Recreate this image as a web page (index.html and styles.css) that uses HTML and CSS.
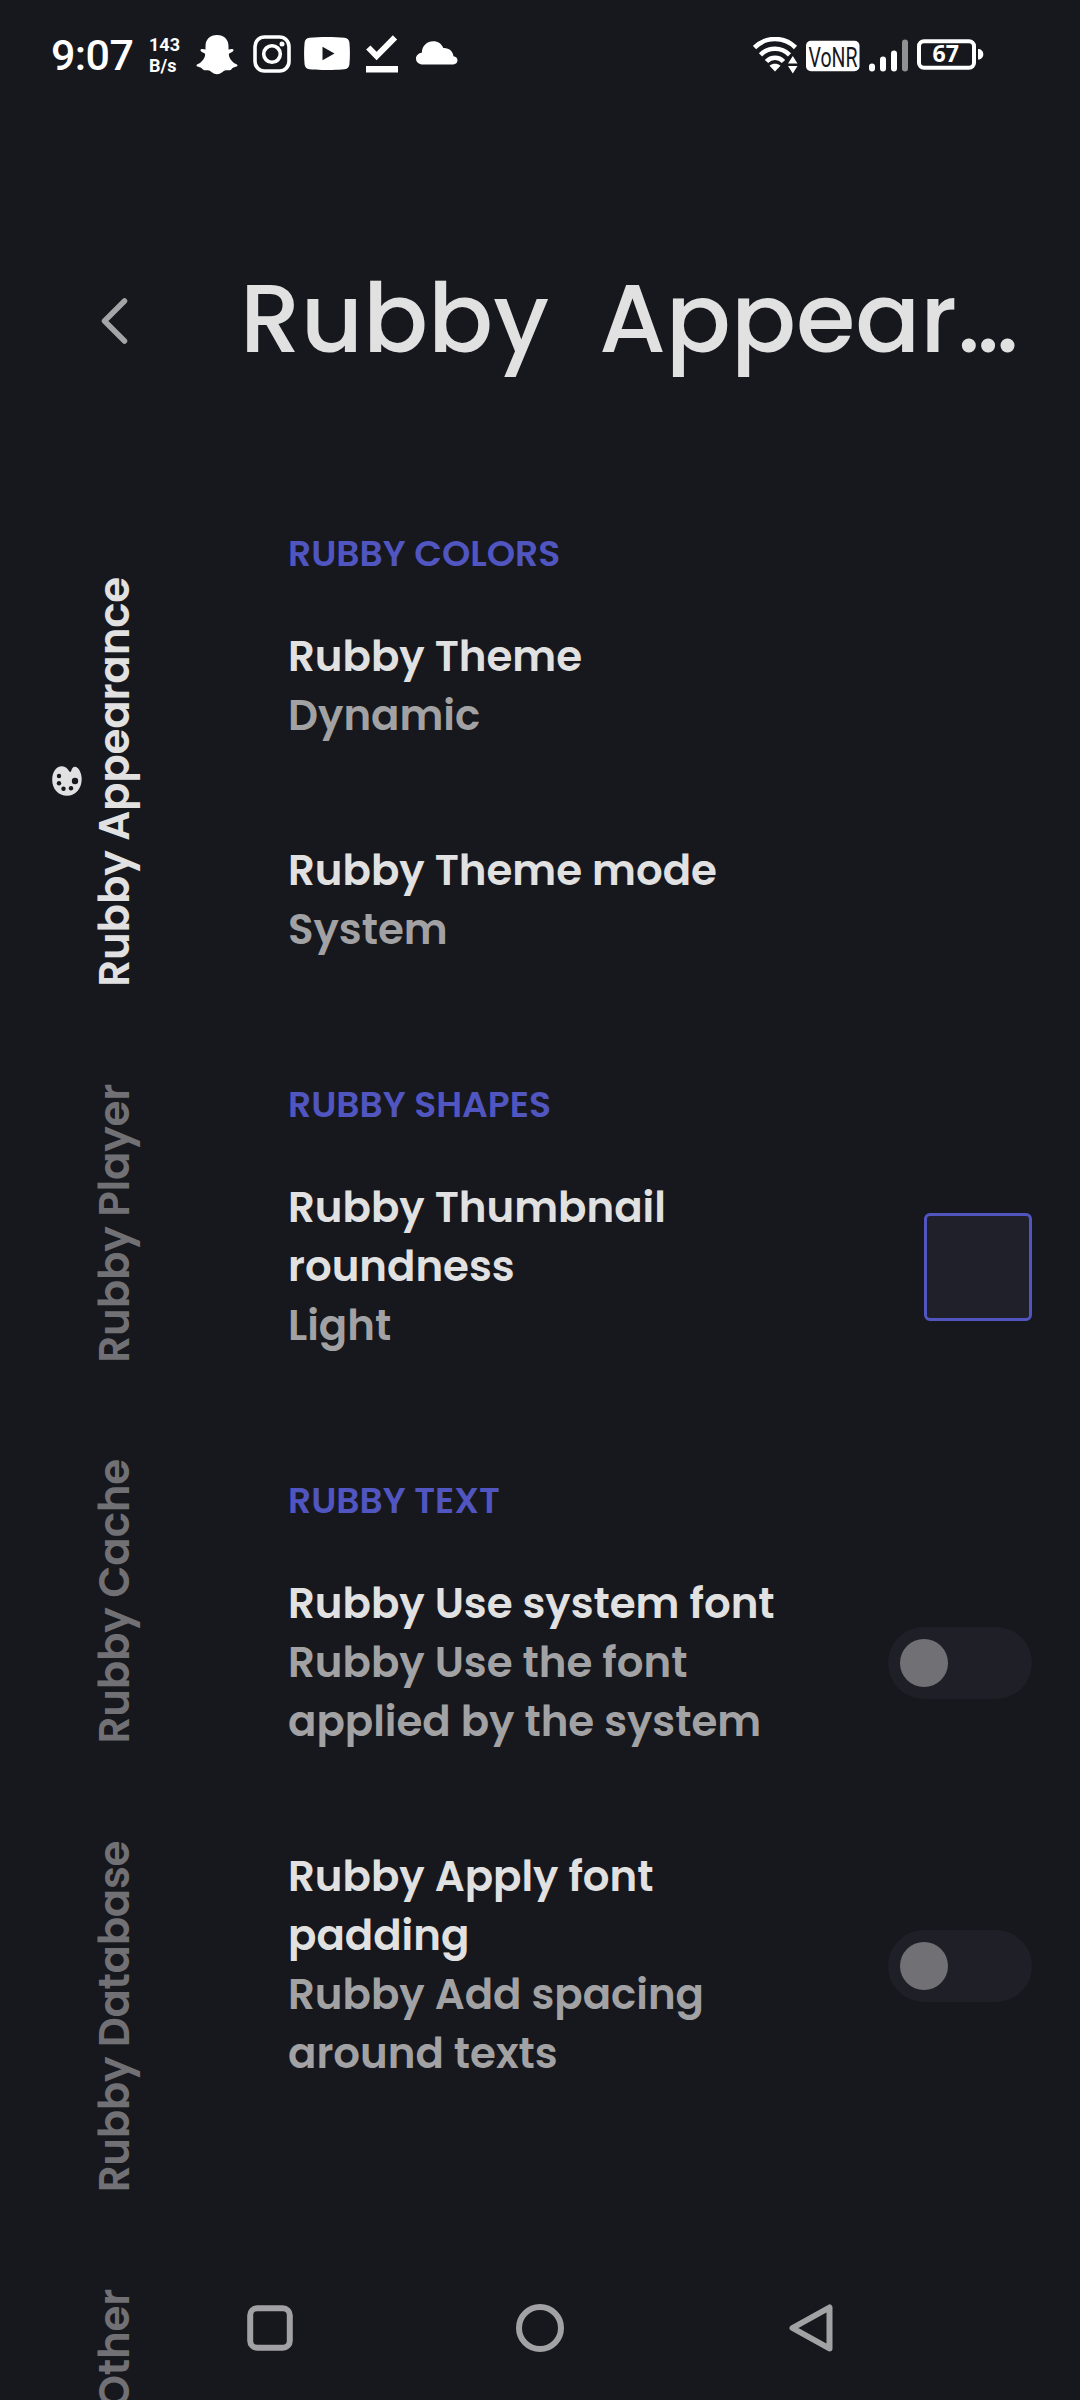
FILE: index.html
```html
<!DOCTYPE html>
<html lang="en">
<head>
<meta charset="utf-8">
<title>Rubby Appearance</title>
<link rel="stylesheet" href="styles.css">
</head>
<body>
<div class="screen">
  <div class="status">
    <div class="status-left">
      <span class="clock">9:07</span>
      <span class="rate"><span>143</span><span>B/s</span></span>
      <svg class="snap" width="42" height="40" viewBox="0 0 42 40"><path d="M21 0c7 0 11.500 4.500 11.500 11v3.500c1.500-.2 3-1 4.500-.3.800.6.600 1.900-.6 2.600-1.600 1-3.400 1.200-3.600 2.700.5 4.500 4 8.500 8.200 9.900.8.500.6 1.500-.5 2.200-2 1-4.100 1-5.300 2.900-.7 1.200-3 .5-5.200.8-3.200.5-4.800 4-9 4s-5.800-3.500-9-4c-2.200-.3-4.500.4-5.200-.8-1.200-1.900-3.300-1.900-5.300-2.900-1.100-.7-1.300-1.700-.5-2.200 4.200-1.400 7.700-5.400 8.200-9.900-.2-1.500-2-1.700-3.600-2.700-1.200-.7-1.400-2-.6-2.600 1.500-.7 3 .1 4.500.3V11C9.500 4.500 14 0 21 0z" fill="#fff"/></svg>
      <svg class="insta" width="38" height="38" viewBox="0 0 38 38" fill="none" stroke="#fff"><rect x="2" y="2" width="34" height="34" rx="9.500" stroke-width="3.600"/><circle cx="19" cy="19" r="8.300" stroke-width="3.600"/><circle cx="29" cy="9" r="2.500" fill="#fff" stroke="none"/></svg>
      <svg class="tube" width="46" height="33" viewBox="0 0 46 33"><path fill="#fff" fill-rule="evenodd" d="M23 0c6 0 13 .2 17.500.7 3 .4 4.600 2 4.900 4.800.7 7 .7 15 0 22-.3 2.800-1.900 4.400-4.900 4.800-9 1-26 1-35 0-3-.4-4.600-2-4.900-4.800-.7-7-.7-15 0-22C.9 2.700 2.500 1.100 5.500.7 10 .2 17 0 23 0zM18.500 9.700v13.600l12-6.800z"/></svg>
      <svg class="done" width="32" height="38" viewBox="0 0 32 38"><path d="M2.300 12.500 10.600 21 29 2.400" fill="none" stroke="#fff" stroke-width="6"/><path d="M0 31h32v6.500H0z" fill="#fff"/></svg>
      <svg class="cloud" width="42" height="24" viewBox="0 0 42 24"><path fill="#fff" d="M7 23.500C2.800 23.500 0 21 0 17.500 0 14.500 2.500 12 5.800 11.700 6 5 11 .3 17.300.3c4.700 0 8.400 2.700 10 6.800 5.200-.5 9.700 3.200 10.200 8.200 2.400.2 4 1.700 4 4s-1.700 4.200-4.300 4.200z"/></svg>
    </div>
    <div class="status-right">
      <svg width="45" height="37" viewBox="0 0 45 37"><g fill="none" stroke="#fff" stroke-width="4.600"><path d="M1.500 10.500C13-.8 31-.8 42.500 10.500"/><path d="M7.500 17.800c8.200-8 20.800-8 29 0"/><path d="M13.500 24.500c4.700-5 12.300-5 17 0"/></g><path fill="#fff" d="M16.500 28.800c3.500-2.600 7.500-2.600 11 0L22 34.500z"/><path d="M39.500 17.500 32 28l7.500 9H45V18z" fill="#17181d"/><path fill="#fff" d="M35 26.500h9.500l-4.700-7.500zM35 29h9.500l-4.700 7.500z"/></svg>
      <svg class="vonr" width="54" height="32" viewBox="0 0 54 32"><rect y=".7" width="53.500" height="30.600" rx="5" fill="#fff"/><text x="2.500" y="27" textLength="49" lengthAdjust="spacingAndGlyphs">VoNR</text></svg>
      <svg class="bars" width="40" height="33" viewBox="0 0 40 33" fill="#fff"><rect y="24.500" width="6" height="8" rx="3"/><rect x="11" y="17.500" width="6" height="15" rx="3"/><rect x="22" y="11.500" width="6" height="21" rx="3"/><rect x="33" y=".5" width="6" height="32" rx="3" fill="#919194"/></svg>
      <svg class="battery" width="67" height="31" viewBox="0 0 67 31"><rect x="2" y="2.200" width="55" height="26.500" rx="5" fill="none" stroke="#fff" stroke-width="4"/><path d="M61 10c3 0 5.300 2 5.300 5.200s-2.300 5.300-5.300 5.300z" fill="#fff"/><text x="15.500" y="23.200" textLength="26.500" lengthAdjust="spacingAndGlyphs">67</text></svg>
    </div>
  </div>

  <div class="layout">
    <nav class="side">
      <button class="back" aria-label="Back"><svg width="27" height="46" viewBox="0 0 27 46"><path d="M23.500 3 3.500 23l20 20" fill="none" stroke="#a5a5a7" stroke-width="5.500" stroke-linecap="round" stroke-linejoin="round"/></svg></button>
      <div class="tabs">
        <div class="tab active">
          <svg class="palette" width="30" height="30" viewBox="0 0 30 30"><path fill="#e1e1e2" d="M10 .2c3.500 0 5.500 2.200 7 4.800.8 1.300 2 1.300 2.300-.2C19.600 2.500 21 .7 23 .7c3 0 6.700 5.500 6.700 12.300C29.700 22.500 23.500 29.800 15 29.800S.2 23 .2 14C.2 6 4 .2 10 .2z"/><g fill="#17181d"><circle cx="7" cy="10" r="2.200"/><circle cx="7" cy="17.200" r="2.200"/><circle cx="11.500" cy="22.800" r="2.200"/><circle cx="19" cy="22.300" r="2.200"/><circle cx="23" cy="15" r="3.200"/></g></svg>
          <span>Rubby Appearance</span>
        </div>
        <div class="tab"><span>Rubby Player</span></div>
        <div class="tab"><span>Rubby Cache</span></div>
        <div class="tab tight"><span>Rubby Database</span></div>
        <div class="tab"><span>Rubby Other</span></div>
      </div>
    </nav>

    <main class="content">
      <h1>Rubby  Appear…</h1>
      <section>
        <h2>RUBBY COLORS</h2>
        <div class="entry"><div class="text"><b>Rubby Theme</b><p>Dynamic</p></div></div>
        <div class="entry"><div class="text"><b>Rubby Theme mode</b><p>System</p></div></div>
      </section>
      <section>
        <h2>RUBBY SHAPES</h2>
        <div class="entry"><div class="text"><b>Rubby Thumbnail roundness</b><p>Light</p></div><div class="swatch"></div></div>
      </section>
      <section>
        <h2>RUBBY TEXT</h2>
        <div class="entry"><div class="text"><b>Rubby Use system font</b><p>Rubby Use the font applied by the system</p></div><div class="switch"><i></i></div></div>
        <div class="entry"><div class="text"><b>Rubby Apply font padding</b><p>Rubby Add spacing around texts</p></div><div class="switch"><i></i></div></div>
      </section>
    </main>
  </div>

  <div class="navbar">
    <svg width="46" height="46" viewBox="0 0 46 46"><rect x="3.200" y="3.200" width="39.600" height="39.600" rx="7" fill="none" stroke="#a2a2a4" stroke-width="6"/></svg>
    <svg class="home" width="48" height="48" viewBox="0 0 48 48"><circle cx="24" cy="24" r="21" fill="none" stroke="#a2a2a4" stroke-width="6"/></svg>
    <svg width="44" height="48" viewBox="0 0 44 48"><path d="M40.500 3.500v41L3.500 24z" fill="none" stroke="#a2a2a4" stroke-width="6" stroke-linejoin="round"/></svg>
  </div>
</div>
</body>
</html>
```
FILE: styles.css
```css
* { box-sizing: border-box; margin: 0; padding: 0; }
body {
  background: #17181d;
  color: #e1e1e2;
  font-family: Poppins, Inter, sans-serif;
  font-weight: 600;
}
svg { display: block; flex: none; }

.screen {
  position: relative;
  width: 1080px;
  height: 2400px;
  overflow: hidden;
}

/* Status bar */
.status {
  display: flex;
  justify-content: space-between;
  height: 110px;
  padding: 35px 96px 0 51px;
  color: #fff;
  font-family: Roboto, sans-serif;
}
.status-left, .status-right { display: flex; align-items: flex-start; }
.status-right { padding-top: 2px; }
.clock {
  width: 98px;
  font-size: 43px;
  line-height: 40px;
  font-weight: 500;
  letter-spacing: -0.6px;
}
.rate {
  display: flex;
  flex-direction: column;
  width: 47px;
  font-size: 18px;
  line-height: 20.500px;
  font-weight: 700;
}
.insta { margin-left: 15px; }
.tube { margin: 2px 0 0 13px; }
.done { margin-left: 16px; }
.cloud { margin: 6px 0 0 18px; }
.vonr { margin: 3px 0 0 8px; }
.vonr text { font: 400 27.500px Roboto, sans-serif; fill: #17181d; }
.bars { margin: 2px 0 0 9px; }
.battery { margin: 2px 0 0 8px; }
.battery text { font: 700 23px "Noto Sans", sans-serif; fill: #fff; }

/* Two-column page */
.layout { display: flex; height: 2290px; }
.side { width: 240px; flex: none; }
.back {
  display: block;
  height: 467px;
  padding: 188px 0 233px 101px;
  background: none;
  border: 0;
}
.tabs { display: flex; flex-direction: column; gap: 97px; }
.tab {
  display: flex;
  align-items: center;
  gap: 3px;
  padding-left: 52px;
  color: #717175;
  font-size: 42px;
  line-height: 59px;
  letter-spacing: -0.2px;
}
.tab:not(.active) { padding-left: 85px; }
.tab.active { color: #e1e1e2; }
.tab.tight { letter-spacing: -0.35px; }
.tab span {
  writing-mode: vertical-rl;
  transform: rotate(180deg);
  white-space: nowrap;
}
.palette { margin-bottom: 2px; }

.content { flex: 1; padding-right: 48px; }
h1 {
  height: 346.900px;
  padding-top: 142px;
  font-size: 96px;
  line-height: 134px;
  font-weight: 500;
  white-space: pre;
}
section { padding-left: 48px; }
h2 {
  margin-top: 71.500px;
  font-size: 36.100px;
  line-height: 51.500px;
  font-weight: 600;
  color: #5055c0;
}
.entry {
  display: flex;
  align-items: center;
  justify-content: space-between;
  padding: 48px 0;
  font-size: 41.900px;
  line-height: 59px;
}
.text { width: 540px; margin: -1px 0 1px; }
.text b { display: block; font-weight: 600; }
.text p { color: #a2a2a4; }
.swatch {
  width: 108px;
  height: 108px;
  border: 3px solid #5055c0;
  border-radius: 6px;
  background: #20202a;
}
.switch {
  width: 144px;
  height: 72px;
  padding: 12px;
  border-radius: 36px;
  background: #1f1f28;
}
.switch i {
  display: block;
  width: 48px;
  height: 48px;
  border-radius: 50%;
  background: #717175;
}

/* System navigation, drawn over the page */
.navbar {
  position: absolute;
  inset: auto 0 0 0;
  display: flex;
  align-items: center;
  justify-content: space-between;
  height: 144px;
  padding: 0 247px;
}
.home { margin: 0 1px 0 -1px; }
```
